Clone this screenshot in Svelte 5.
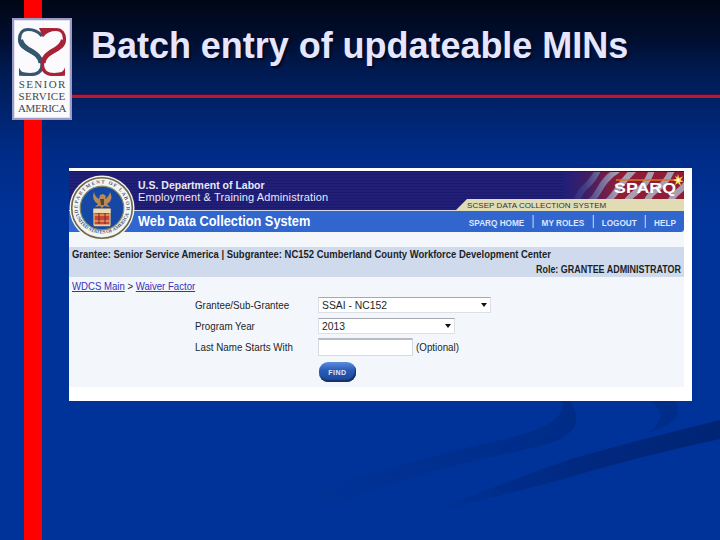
<script>
  let grantee = 'SSAI - NC152';
  let year = '2013';
  let lastName = '';

  const nav = ['SPARQ HOME', 'MY ROLES', 'LOGOUT', 'HELP'];
</script>

<div class="slide">
  <svg class="swoosh" viewBox="0 0 720 540" aria-hidden="true">
    <defs>
      <linearGradient id="fadeA" gradientUnits="userSpaceOnUse" x1="310" y1="500" x2="576" y2="415">
        <stop offset="0" stop-color="#002b86" stop-opacity="0.05" />
        <stop offset="1" stop-color="#002c88" />
      </linearGradient>
      <linearGradient id="fadeB" gradientUnits="userSpaceOnUse" x1="422" y1="515" x2="720" y2="425">
        <stop offset="0" stop-color="#00267a" stop-opacity="0" />
        <stop offset="0.6" stop-color="#00287e" />
        <stop offset="1" stop-color="#002575" />
      </linearGradient>
    </defs>
    <path fill="url(#fadeA)" d="M561 398 Q568 415 542 427 C520 437 480 444 450 452 Q370 473 317 488 L317 510 Q380 487 441 469 C490 457 530 449 551 443 Q582 432 575 411 L569 398Z" />
    <path fill="#002c8a" d="M645 398 Q675 414 647 433 Q692 419 672 398Z" />
    <path fill="url(#fadeB)" d="M720 420 Q650 437 574 458 Q520 476 422 515 Q500 496 560 480 Q640 456 720 439Z" />
  </svg>
  <div class="stripe"></div>
  <div class="rule"></div>

  <div class="logo">
    <svg viewBox="0 0 52 53" width="52" height="53">
      <g fill="none" stroke="#34566f">
        <path stroke-width="3.2" d="M26 9 C22 4 17 2.500 12 2.500 C6 2.500 3.500 7 3.500 12 C3.500 17 6 20 10 22 C17 26 26 30 26 38 C26 45 21 47.500 14 47.500 C9 47.500 6 46.500 3.300 47" />
        <path stroke-width="5" d="M4.500 13 C6 18 9 20.500 13 22.800 C19 26 24 29 25 36" />
      </g>
      <path fill="#34566f" d="M3 40.500 Q5 46 11 46 L10 49 L3 48.600Z" />
      <g fill="none" stroke="#a82338">
        <path stroke-width="3.2" d="M26 9 C30 4 35 2.500 40 2.500 C46 2.500 48.500 7 48.500 12 C48.500 17 46 20 42 22 C35 26 26.500 30 26.500 38 C26.500 45 31 47.500 38 47.500 C43 47.500 46 46.500 49 47" />
        <path stroke-width="5" d="M47.500 13 C46 18 43 20.500 39 22.800 C33 26 28 29 27 36" />
      </g>
      <path fill="#a82338" d="M49 40.500 Q47 46 41 46 L42 49 L49 48.600Z M23 1 L40 1 Q31 3 26.200 9.500 Q25 5 23 1Z" />
    </svg>
    <span class="senior">SENIOR</span>
    <span class="service">SERVICE</span>
    <span class="america">AMERICA</span>
  </div>

  <h1>Batch entry of updateable MINs</h1>

  <div class="panel">
    <div class="page">
      <header>
        <div class="top">
          <div class="dept">
            <b>U.S. Department of Labor</b>
            <span>Employment &amp; Training Administration</span>
          </div>
          <svg class="flag" viewBox="0 0 120 28" width="120" height="28">
            <defs>
              <linearGradient id="flagFade">
                <stop offset="0" stop-color="#211f78" />
                <stop offset="0.18" stop-color="#211f78" stop-opacity="0.75" />
                <stop offset="0.45" stop-color="#211f78" stop-opacity="0" />
              </linearGradient>
            </defs>
            <rect width="120" height="28" fill="#8f1d36" />
            <g fill="none" stroke="#a99db2" stroke-width="6">
              <path d="M12 30 C18 12 26 16 34 -2" />
              <path d="M25 30 C36 24 34 10 54 -2" />
              <path d="M43 30 C54 20 56 10 72 -4" />
              <path d="M62 30 C70 18 80 20 88 -2" />
              <path d="M82 30 C90 14 98 20 108 -2" />
              <path d="M106 30 C110 20 116 20 122 12" />
            </g>
            <rect width="120" height="28" fill="url(#flagFade)" />
            <path d="M52 8 H115" stroke="#d87524" stroke-width="1.6" />
            <text x="50" y="21" textLength="62" lengthAdjust="spacingAndGlyphs">SPARQ</text>
            <path fill="#ffd94f" d="M114 2 L115.2 6 L119 4.500 L116.500 8 L120 9.500 L116 10 L117 14 L114 11 L111 13 L112.200 9.500 L109 8 L112.500 6.800 L111 3.500 L113.200 5.500Z" />
            <circle cx="114" cy="8" r="1.500" fill="#fff" />
          </svg>
          <div class="tag"><span>SCSEP DATA COLLECTION SYSTEM</span></div>
        </div>
        <div class="bar">
          <strong>Web Data Collection System</strong>
          <nav>
            {#each nav as item}
              <a href="#top">{item}</a>
            {/each}
          </nav>
        </div>
        <svg class="seal" viewBox="0 0 66 66" width="66" height="66">
          <defs>
            <path id="ringTop" d="M9.500 40 A24.500 24.500 0 1 1 56.500 40" />
            <path id="ringBottom" d="M6 38 A28 28 0 0 0 60 38" />
          </defs>
          <circle cx="33" cy="33" r="32.500" fill="#f4f3ee" />
          <circle cx="33" cy="33" r="30.300" fill="#f3f4f4" stroke="#6d684b" stroke-width="1.600" />
          <circle cx="33" cy="33" r="21.800" fill="#1548a5" stroke="#8b8767" stroke-width="1.200" />
          <text class="ring"><textPath href="#ringTop" startOffset="2" textLength="84">DEPARTMENT OF LABOR</textPath></text>
          <text class="ring"><textPath href="#ringBottom" startOffset="2" textLength="70">UNITED STATES OF AMERICA</textPath></text>
          <path fill="#b98a55" d="M25 17 Q26 22 30 24 L31 20 L34 19 L37 21 L36 24 Q40 22 41 17 Q45 25 38 29 L41 32 L35 31 L33 33 L31 31 L26 32 L29 29 Q22 25 25 17Z" />
          <path fill="#5d4427" d="M31 24 L35 24 L35 30 L32 30Z" />
          <rect x="25" y="34" width="16" height="16" fill="#c8463a" stroke="#e3c383" stroke-width="1.200" />
          <path d="M25 40 H41 M25 46 H41" stroke="#e0a65a" stroke-width="1.500" />
          <path d="M30 36 V49 M36 36 V49" stroke="#7e2430" stroke-width="1" />
          <rect x="24.500" y="34" width="17" height="4" fill="#efd9b4" />
          <path d="M25 50.500 H41" stroke="#e9cda0" stroke-width="1.500" />
        </svg>
      </header>

      <div class="info">
        <p class="who">Grantee: Senior Service America | Subgrantee: NC152 Cumberland County Workforce Development Center</p>
        <p class="role">Role: GRANTEE ADMINISTRATOR</p>
      </div>

      <div class="crumbs"><a href="#main">WDCS Main</a> &gt; <a href="#waiver">Waiver Factor</a></div>

      <form on:submit|preventDefault>
        <span class="label">Grantee/Sub-Grantee</span>
        <div class="select wide"><span>{grantee}</span><i></i></div>
        <span class="label">Program Year</span>
        <div class="select"><span>{year}</span><i></i></div>
        <label class="label" for="last">Last Name Starts With</label>
        <div class="field"><input id="last" bind:value={lastName} /><span>(Optional)</span></div>
        <button>FIND</button>
      </form>
    </div>
  </div>
</div>

<style>
  :global(body) {
    margin: 0;
  }

  .slide {
    position: relative;
    width: 720px;
    height: 540px;
    overflow: hidden;
    box-sizing: border-box;
    background: linear-gradient(#000715 0, #000d2c 35px, #001a50 70px, #00226a 105px, #002c88 155px, #003399 225px);
    font-family: "Liberation Sans", Arial, sans-serif;
  }

  .swoosh {
    position: absolute;
    inset: 0;
  }

  .stripe {
    position: absolute;
    left: 24px;
    top: 0;
    width: 18px;
    height: 540px;
    background: #fe0000;
  }

  .rule {
    position: absolute;
    left: 42px;
    right: 0;
    top: 94px;
    height: 4px;
    box-sizing: border-box;
    background: #b51a30;
    border-top: 1px solid #4a0d3c;
  }

  .logo {
    position: absolute;
    left: 12px;
    top: 18px;
    width: 60px;
    height: 102px;
    box-sizing: border-box;
    border: 2px solid #9a9cc6;
    outline: 1px solid #e4e4f0;
    outline-offset: -3px;
    background: #fbfbfd;
    padding: 7px 2px 0;
    display: flex;
    flex-direction: column;
    align-items: center;
    font: 11px/12px "Liberation Serif", serif;
    color: #3d4a50;
  }

  .logo svg {
    flex: none;
    margin-bottom: -2px;
  }

  .logo span {
    height: 12px;
    white-space: nowrap;
  }

  .senior {
    letter-spacing: 1.4px;
    margin-right: -1.4px;
  }

  .service {
    letter-spacing: 0.3px;
  }

  .america {
    letter-spacing: -0.4px;
  }

  h1 {
    position: relative;
    margin: 0;
    padding: 24px 0 0 91px;
    height: 144px;
    font-size: 36px;
    line-height: 44px;
    letter-spacing: -0.03px;
    color: #e6e6ff;
    text-shadow: 2px 2px 2px #000a24;
    white-space: nowrap;
  }

  .panel {
    position: relative;
    width: 623px;
    height: 233px;
    margin-left: 69px;
    box-sizing: border-box;
    padding: 3px 8px 14px 0;
    background: #fff;
  }

  .page {
    height: 216px;
    background: #f3f7fc;
    color: #1d1f26;
  }

  header {
    position: relative;
    height: 76px;
  }

  .top {
    height: 38px;
    display: grid;
    grid-template-columns: 1fr 120px;
    grid-template-rows: 27px 11px;
    background: repeating-linear-gradient(#211f78 0 2px, #1b1a6c 2px 3px);
    border-top: 1px solid #1b1c50;
    border-bottom: 1px solid #d5dbe8;
  }

  .dept {
    padding: 7px 0 0 69px;
    color: #e8e8f8;
    font-size: 11px;
    line-height: 12px;
    white-space: nowrap;
  }

  .dept b,
  .dept span {
    display: block;
  }

  .dept b {
    font-size: 10.5px;
  }

  .dept span {
    letter-spacing: 0.12px;
  }

  .flag text {
    font: bold 15px "Liberation Sans", sans-serif;
    fill: #fff;
  }

  .tag {
    grid-column: 1 / 3;
    justify-self: end;
    width: 229px;
    height: 12px;
    background: #e1dcb4;
    clip-path: polygon(12px 0, 100% 0, 100% 100%, 0 100%);
    font-size: 8px;
    line-height: 14px;
    letter-spacing: 0.07px;
    color: #30303a;
    white-space: nowrap;
  }

  .tag span {
    margin-left: 12px;
  }

  .bar {
    height: 21px;
    display: flex;
    justify-content: space-between;
    background: #3166cf;
    border-radius: 0 0 3px 0;
    color: #fff;
  }

  .bar strong {
    margin-left: 69px;
    font-size: 15px;
    line-height: 20px;
    white-space: nowrap;
    transform: scaleX(0.852);
    transform-origin: left;
  }

  nav {
    display: flex;
    align-items: center;
    transform: scaleX(0.912);
    transform-origin: right;
  }

  nav a {
    font-size: 9px;
    line-height: 10px;
    font-weight: bold;
    color: #dbe7fc;
    padding: 3px 9px 0;
    text-decoration: none;
    white-space: nowrap;
  }

  nav a + a {
    border-left: 1px solid #d8e5fa;
  }

  .seal {
    position: absolute;
    left: 0;
    top: 4px;
  }

  .ring {
    font: bold 5px "Liberation Serif", serif;
    fill: #4b5872;
  }

  .info {
    height: 30px;
    background: #cfdbed;
    font-size: 10px;
    font-weight: bold;
    line-height: 15px;
    white-space: nowrap;
  }

  .info p {
    margin: 0;
  }

  .who {
    padding-left: 3px;
    transform: scaleX(0.946);
    transform-origin: 3px 0;
  }

  .role {
    text-align: right;
    padding-right: 3px;
    transform: scaleX(0.895);
    transform-origin: calc(100% - 3px) 0;
  }

  .crumbs {
    padding: 3px 3px 0;
    height: 14px;
    font-size: 11px;
    line-height: 12px;
    transform: scaleX(0.873);
    transform-origin: 3px 0;
  }

  .crumbs a {
    color: #3532bd;
  }

  form {
    display: grid;
    grid-template-columns: 123px auto;
    grid-template-rows: 22px 20px 22px 24px;
    align-items: center;
    justify-content: start;
    padding-left: 126px;
    font-size: 11px;
    white-space: nowrap;
  }

  .label,
  .select span,
  .field span {
    transform: scaleX(0.89);
    transform-origin: left;
  }

  .select {
    width: 137px;
    height: 16px;
    box-sizing: border-box;
    display: flex;
    align-items: center;
    justify-content: space-between;
    padding: 0 3px;
    border: 1px solid #dcdfe5;
    border-top-color: #a5a8ae;
    background: #fff;
  }

  .select span {
    transform: scaleX(0.94);
  }

  .select.wide {
    width: 173px;
  }

  .select i {
    border: 3.5px solid transparent;
    border-top: 4px solid #111;
    border-bottom: 0;
  }

  .field {
    display: flex;
    align-items: center;
    gap: 3px;
  }

  input {
    width: 95px;
    height: 18px;
    box-sizing: border-box;
    border: 1px solid #d6d9e0;
    border-top: 2px solid #b9bcc2;
    background: #fff;
    padding: 0 2px;
    font-size: 10px;
  }

  button {
    grid-column: 2;
    width: 37px;
    height: 20px;
    margin: 3px 0 0 1px;
    padding: 1px 0 0;
    border: 0;
    border-radius: 9px;
    background: linear-gradient(#5b8de0, #2c5cb8 40%, #1c4492);
    box-shadow: inset -1px -2px 1px #16306f;
    color: #dbe8fb;
    font: bold 7px "Liberation Sans", sans-serif;
    letter-spacing: 0.5px;
  }
</style>
